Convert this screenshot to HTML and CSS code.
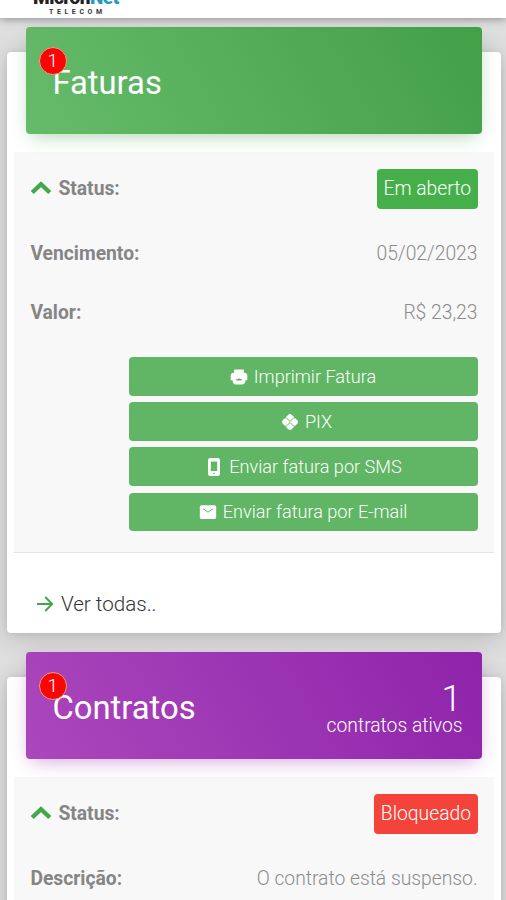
FILE: index.html
```html
<!DOCTYPE html>
<html lang="pt-BR">
<head>
<meta charset="utf-8">
<meta name="viewport" content="width=device-width, initial-scale=1">
<title>Faturas e contratos</title>
<link rel="stylesheet" href="styles.css">
</head>
<body>
<header class="topbar">
  <div class="logo">
    <div class="logo-name">Micron<span>Net</span></div>
    <div class="logo-sub">TELECOM</div>
  </div>
</header>
<main class="page">
  <section class="card">
    <div class="card-header green">
      <span class="badge">1</span>
      <h2>Faturas</h2>
    </div>
    <div class="details">
      <div class="row status">
        <b class="label"><svg class="chevron" viewBox="0 0 22 14"><path d="M2.200 11.500 11 3.200l8.800 8.300"/></svg><span>Status:</span></b>
        <span class="tag open">Em aberto</span>
      </div>
      <div class="row"><b class="label">Vencimento:</b><span class="value date">05/02/2023</span></div>
      <div class="row"><b class="label">Valor:</b><span class="value">R$ 23,23</span></div>
      <div class="actions">
        <button><svg class="icon" viewBox="0 0 18 18"><path d="M4.200 1.500h9.600v3.200h.7c1.600 0 2.800 1.200 2.800 2.800v4.800h-1.900v.8c0 1.900-1.500 3.400-3.400 3.400H6c-1.900 0-3.400-1.500-3.400-3.400v-.8H.7V7.500C.7 5.900 1.900 4.700 3.500 4.700h.7z"/><path class="cut" d="M6.200 11.300q2.800-1.600 5.600 0v1.300H6.200z"/></svg><span>Imprimir Fatura</span></button>
        <button class="pix"><svg class="icon" viewBox="0 0 18 18"><path d="M7.300 1.700q1.700-1.400 3.400 0l5.600 5.600q1.400 1.700 0 3.400l-5.600 5.600q-1.700 1.400-3.400 0l-5.600-5.600q-1.400-1.700 0-3.400z"/><path class="line" d="M4 4.800h1.300L9 8.500l3.700-3.700H14M4 13.200h1.300L9 9.500l3.700 3.700H14"/></svg><span>PIX</span></button>
        <button class="sms"><svg class="icon phone" viewBox="0 0 12 18"><rect x="0" y="0" width="12" height="18" rx="2.300"/><path class="cut" d="M2.800 3.500h6.400v9.500H2.800z"/><circle class="cut" cx="6" cy="15.500" r=".8"/></svg><span>Enviar fatura por SMS</span></button>
        <button class="mail"><svg class="icon" viewBox="0 0 18 18"><rect x=".8" y="2.300" width="16.400" height="13.600" rx="1.900"/><path class="line" d="m4 5.700 5 3.500 5-3.500"/></svg><span>Enviar fatura por E-mail</span></button>
      </div>
    </div>
    <a class="more"><svg viewBox="0 0 18 18"><path d="M1 9h15M9.200 2l7 7-7 7"/></svg><span>Ver todas..</span></a>
  </section>
  <section class="card">
    <div class="card-header purple">
      <span class="badge">1</span>
      <h2>Contratos</h2>
      <div class="summary"><strong>1</strong><span>contratos ativos</span></div>
    </div>
    <div class="details contracts">
      <div class="row status">
        <b class="label"><svg class="chevron" viewBox="0 0 22 14"><path d="M2.200 11.500 11 3.200l8.800 8.300"/></svg><span>Status:</span></b>
        <span class="tag blocked">Bloqueado</span>
      </div>
      <div class="row"><b class="label">Descrição:</b><span class="value">O contrato está suspenso.</span></div>
    </div>
  </section>
</main>
</body>
</html>
```

FILE: styles.css
```css
* { box-sizing: border-box; }
body { margin: 0; height: 900px; overflow: hidden; background: #dedede; font-family: Roboto, sans-serif; font-size: 19.3px; font-weight: 300; }
.topbar { position: relative; z-index: 1; height: 18px; padding-left: 33px; display: flex; align-items: flex-end; overflow: hidden; background: #fff; box-shadow: 0 1px 8px rgba(0,0,0,.38); }
.logo { width: 87px; height: 25px; flex: none; margin-bottom: 5px; }
.logo-name { height: 20px; font: 900 19px/19px Roboto, sans-serif; letter-spacing: -.5px; color: #222; white-space: nowrap; }
.logo-name span { color: #2498c4; }
.logo-sub { height: 8px; padding-left: 16px; font: 700 7px/8px Roboto, sans-serif; letter-spacing: 3.600px; color: #333; }
.page { height: 882px; overflow: hidden; padding: 34px 5.500px 0 7.400px; }
.card { height: 581px; margin-bottom: 44px; padding: 0 7px; border-radius: 4px; background: #fff; box-shadow: 0 5px 24px rgba(0,0,0,.17), 0 0 6px rgba(0,0,0,.08); display: flex; flex-direction: column; }
.card-header { position: relative; flex: none; height: 107px; margin: -25.500px 12px 0; padding: 36px 19px 0 26px; display: flex; justify-content: space-between; border-radius: 4px; color: #fff; }
.green { background: linear-gradient(60deg, #66bb6a, #43a047); box-shadow: 0 6px 18px -5px rgba(65,155,70,.45); }
.purple { background: linear-gradient(60deg, #ab47bc, #8e24aa); box-shadow: 0 6px 18px -5px rgba(156,39,176,.45); }
.card-header h2 { margin: 0; font-size: 32.800px; line-height: 40px; font-weight: 400; }
.badge { position: absolute; left: 12.500px; top: 20px; width: 28px; height: 28px; border: 1px solid #ef9c7c; border-radius: 50%; background: #f90505; font-size: 19px; line-height: 25px; text-align: center; }
.summary { display: flex; flex-direction: column; align-items: flex-end; margin-top: -9px; }
.summary strong { height: 36px; padding-right: 1px; font-size: 36px; line-height: 41px; font-weight: 300; }
.summary span { line-height: 22px; }
.details { height: 402px; margin-top: 18px; padding: 0 16px; background: #f8f8f8; border-bottom: 1px solid #e5e5e5; }
.row { height: 58.700px; display: flex; align-items: center; justify-content: space-between; white-space: nowrap; }
.status { height: 73px; padding-top: 1px; }
.label { display: flex; align-items: center; gap: 6px; font-size: 19.300px; font-weight: 700; color: #858585; }
.chevron { width: 22px; height: 14px; margin: 0 0 2px; fill: none; stroke: #42a84b; stroke-width: 4.400; }
.value { color: #8c8c8c; }
.tag { height: 40px; padding: 0 6.500px; border-radius: 4px; line-height: 39px; color: #fff; }
.open { background: #45b04a; }
.blocked { background: #f3433a; }
.actions { width: 349px; margin: 15.400px 0 0 auto; display: grid; gap: 6.300px; }
button { height: 38.800px; padding: 0; border: 0; border-radius: 4px; background: #60b664; color: #fff; font: 300 18.100px/38px Roboto, sans-serif; display: flex; align-items: center; justify-content: center; gap: 6px; }
.pix { padding-left: 7px; }
.sms { gap: 9px; padding-left: 4px; }
.icon { width: 18px; height: 18px; fill: #fff; flex: none; }
.phone { width: 12px; }
.cut { fill: #60b664; }
.line { fill: none; stroke: #60b664; stroke-width: 1; }
.more { height: 80px; padding: 21px 21.500px 0; display: flex; align-items: center; gap: 7px; color: #333; font-size: 20.600px; line-height: 24px; }
.more svg { width: 18px; height: 18px; fill: none; stroke: #40a54b; stroke-width: 1.900; }
```
